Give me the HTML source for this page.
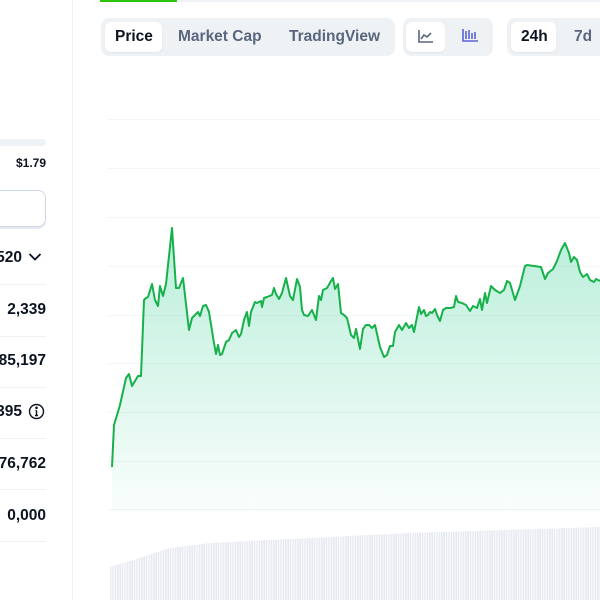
<!DOCTYPE html>
<html><head><style>
*{margin:0;padding:0;box-sizing:border-box}
body{width:600px;height:600px;overflow:hidden;background:#fff;font-family:"Liberation Sans",sans-serif;position:relative;color:#0d1421}
.a{position:absolute}
.grp{position:absolute;top:18px;height:38px;background:#eff2f5;border-radius:8px}
.pill{position:absolute;top:4px;height:30px;background:#fff;border-radius:6px;box-shadow:0 1px 2px rgba(0,0,0,.06)}
.t{position:absolute;top:0;line-height:38px;font-size:15.5px;font-weight:bold;color:#58667e}
.sep{position:absolute;left:0;width:46px;height:1px;background:#eff2f5}
.v{position:absolute;right:554px;font-size:15.5px;font-weight:bold;color:#0d1421;white-space:nowrap}
.g{position:absolute;left:108px;width:492px;height:1px;background:#f3f5f8}
</style></head><body>
<div class="a" style="left:72px;top:0;width:1px;height:600px;background:#eff2f5"></div>
<div class="a" style="left:100px;top:0;width:500px;height:2px;background:#eff2f5"></div>
<div class="a" style="left:100px;top:0;width:77px;height:2px;background:#2ec50e"></div>

<div class="grp" style="left:101px;width:294px">
 <div class="pill" style="left:4px;width:57px"></div>
 <div class="t" style="left:14px;color:#0d1421">Price</div>
 <div class="t" style="left:77px">Market Cap</div>
 <div class="t" style="left:188px">TradingView</div>
</div>
<div class="grp" style="left:403px;width:90px">
 <div class="pill" style="left:3px;width:39px"></div>
 <svg class="a" style="left:15px;top:11px" width="16" height="15" viewBox="0 0 16 15" fill="none" stroke="#58667e" stroke-width="1.6"><path d="M1 1V13H15"/><path d="M3 10L6 6L9 8L13 4"/></svg>
 <svg class="a" style="left:59px;top:10px" width="17" height="15" viewBox="0 0 17 15" fill="none" stroke="#5865d8" stroke-width="1.6"><path d="M1 1V13H16"/><path d="M4 3V11M7 2V11M10 5V11M13 4V11"/></svg>
</div>
<div class="grp" style="left:507px;width:110px">
 <div class="pill" style="left:4px;width:45px"></div>
 <div class="t" style="left:14px;color:#0d1421">24h</div>
 <div class="t" style="left:67px">7d</div>
</div>

<div class="a" style="left:0;top:139px;width:46px;height:7px;background:#eff2f5;border-radius:0 4px 4px 0"></div>
<div class="v" style="top:156px;font-size:12px">$1.79</div>
<div class="a" style="left:-10px;top:190px;width:56px;height:37px;border:1px solid #cfd6e4;border-radius:8px;box-shadow:0 2px 0 #e6e9ef"></div>
<div class="v" style="top:249px;right:578px">520</div>
<svg class="a" style="left:28px;top:252px" width="14" height="10" viewBox="0 0 14 10" fill="none" stroke="#0d1421" stroke-width="1.8"><path d="M1.5 2L7 7.5L12.5 2"/></svg>
<div class="sep" style="top:284px"></div>
<div class="v" style="top:301px">2,339</div>
<div class="sep" style="top:336px"></div>
<div class="v" style="top:352px">85,197</div>
<div class="sep" style="top:387px"></div>
<div class="v" style="top:403px;right:578px">395</div>
<svg class="a" style="left:28px;top:403px" width="17" height="17" viewBox="0 0 17 17" fill="none" stroke="#0d1421" stroke-width="1.4"><circle cx="8.5" cy="8.5" r="7"/><path d="M8.5 7.5V12.5M7 12.5H10M7.5 7.5H8.5"/><circle cx="8.5" cy="4.8" r=".6" fill="#0d1421"/></svg>
<div class="sep" style="top:438px"></div>
<div class="v" style="top:455px">76,762</div>
<div class="sep" style="top:489px"></div>
<div class="v" style="top:507px">0,000</div>
<div class="sep" style="top:541px"></div>

<div class="g" style="top:119px"></div><div class="g" style="top:168px"></div><div class="g" style="top:217px"></div><div class="g" style="top:266px"></div><div class="g" style="top:315px"></div><div class="g" style="top:363px"></div><div class="g" style="top:412px"></div><div class="g" style="top:461px"></div><div class="g" style="top:509px"></div>

<div class="a" style="left:110px;top:525px;width:490px;height:75px;background:repeating-linear-gradient(90deg,#e6e9f0 0 1.2px,#f7f8fa 1.2px 2.4px);clip-path:polygon(0 42px,20px 36px,60px 23px,100px 18px,200px 13px,300px 8px,490px 2px,490px 75px,0 75px)"></div>

<svg class="a" style="left:0;top:0" width="600" height="600">
<defs><linearGradient id="f" gradientUnits="userSpaceOnUse" x1="0" y1="228" x2="0" y2="512"><stop offset="0" stop-color="#16c784" stop-opacity=".3"/><stop offset="1" stop-color="#16c784" stop-opacity="0.02"/></linearGradient></defs>
<path d="M112,467 L114,425 L120,405 L126,378 L129,374 L132,386 L138,376 L141,376 L144,300 L146,298 L148,297 L152,284 L155,300 L158,306 L160,286 L163,296 L166,284 L172,228 L176,288 L179,288 L183,278 L189,330 L192,318 L196,314 L198,312 L200,316 L203,306 L206,305 L209,312 L214,343 L216,354 L218,345 L220,355 L222,354 L226,342 L229,340 L232,333 L236,330 L239,337 L241,334 L244,320 L247,312 L249,326 L251,312 L255,302 L257,303 L261,301 L262,307 L264,298 L267,297 L272,295 L274,288 L276,294 L279,299 L282,293 L286,278 L290,296 L293,300 L297,279 L300,287 L302,310 L304,315 L308,316 L312,310 L316,320 L319,296 L321,300 L323,290 L327,288 L331,281 L333,278 L335,289 L338,284 L341,313 L344,315 L347,318 L351,335 L354,338 L356,329 L360,349 L363,329 L366,325 L369,325 L372,328 L375,325 L380,347 L384,357 L387,355 L390,346 L393,346 L395,332 L399,325 L402,330 L406,323 L409,328 L412,325 L414,332 L419,307 L421,314 L424,310 L426,316 L428,315 L430,312 L432,313 L435,309 L437,315 L440,321 L443,310 L446,308 L450,308 L454,307 L456,296 L458,302 L462,303 L466,305 L470,311 L473,306 L477,308 L480,299 L482,310 L485,293 L487,303 L491,286 L495,290 L500,293 L504,290 L507,281 L510,283 L515,300 L520,286 L525,266 L527,265 L534,266 L541,267 L545,279 L548,273 L553,269 L557,261 L561,250 L565,243 L569,253 L571,262 L574,257 L577,260 L580,272 L583,277 L587,274 L590,280 L594,282 L596,279 L600,281 L600,512 L112,512Z" fill="url(#f)"/>
<path d="M112,467 L114,425 L120,405 L126,378 L129,374 L132,386 L138,376 L141,376 L144,300 L146,298 L148,297 L152,284 L155,300 L158,306 L160,286 L163,296 L166,284 L172,228 L176,288 L179,288 L183,278 L189,330 L192,318 L196,314 L198,312 L200,316 L203,306 L206,305 L209,312 L214,343 L216,354 L218,345 L220,355 L222,354 L226,342 L229,340 L232,333 L236,330 L239,337 L241,334 L244,320 L247,312 L249,326 L251,312 L255,302 L257,303 L261,301 L262,307 L264,298 L267,297 L272,295 L274,288 L276,294 L279,299 L282,293 L286,278 L290,296 L293,300 L297,279 L300,287 L302,310 L304,315 L308,316 L312,310 L316,320 L319,296 L321,300 L323,290 L327,288 L331,281 L333,278 L335,289 L338,284 L341,313 L344,315 L347,318 L351,335 L354,338 L356,329 L360,349 L363,329 L366,325 L369,325 L372,328 L375,325 L380,347 L384,357 L387,355 L390,346 L393,346 L395,332 L399,325 L402,330 L406,323 L409,328 L412,325 L414,332 L419,307 L421,314 L424,310 L426,316 L428,315 L430,312 L432,313 L435,309 L437,315 L440,321 L443,310 L446,308 L450,308 L454,307 L456,296 L458,302 L462,303 L466,305 L470,311 L473,306 L477,308 L480,299 L482,310 L485,293 L487,303 L491,286 L495,290 L500,293 L504,290 L507,281 L510,283 L515,300 L520,286 L525,266 L527,265 L534,266 L541,267 L545,279 L548,273 L553,269 L557,261 L561,250 L565,243 L569,253 L571,262 L574,257 L577,260 L580,272 L583,277 L587,274 L590,280 L594,282 L596,279 L600,281" fill="none" stroke="#16b14a" stroke-width="2" stroke-linejoin="round"/>
</svg>
</body></html>
